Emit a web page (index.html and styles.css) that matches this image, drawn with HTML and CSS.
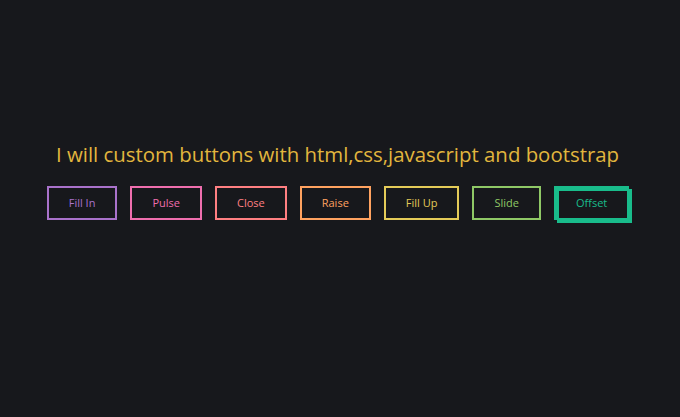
FILE: index.html
```html
<!DOCTYPE html>
<html>
  <head>
    <meta name="viewport" content="width=device-width, initial-scale=1.0">
    <title>Custom Buttons</title>
    <link rel="stylesheet" href="styles.css">
  </head>
  <body>
    <div class="container">
      <h1 class="title">I will custom buttons with html,css,javascript and bootstrap</h1>
      <div class="buttons">
        <button class="fill">Fill In</button>
        <button class="pulse">Pulse</button>
        <button class="close">Close</button>
        <button class="raise">Raise</button>
        <button class="up">Fill Up</button>
        <button class="slide">Slide</button>
        <button class="offset">Offset</button>
      </div>
    </div>
  </body>
</html>
```

FILE: styles.css
```css
body {
  margin: 0;
  height: 100vh;
  background-color: #17181c;
  color: #fff;
  font-family: "Open Sans", "Noto Sans", sans-serif;
}
.container {
  display: flex;
  flex-direction: column;
  align-items: center;
  padding-top: 139px;
}
.title {
  margin: 0 5px 0 0;
  font-size: 20.4px;
  font-weight: 400;
  line-height: 30px;
  color: #e2b63e;
}
.buttons {
  display: flex;
  gap: 13px;
  margin: 17px 4px 0 0;
}
.buttons button {
  background: none;
  border: 2px solid var(--color);
  color: var(--color);
  font-family: "Open Sans", "Noto Sans", sans-serif;
  font-size: 11px;
  font-weight: 500;
  line-height: 10px;
  padding: 10px 20px;
  margin: 0;
  cursor: pointer;
  transition: 0.25s;
}
.buttons button:hover {
  border-color: var(--hover);
  color: #fff;
}
.fill {
  --color: #a972cb;
  --hover: #cb72aa;
}
.pulse {
  --color: #ef6eae;
  --hover: #ef8f6e;
}
.close {
  --color: #ff7f82;
  --hover: #ffdc7f;
}
.raise {
  --color: #ffa260;
  --hover: #e5ff60;
}
.up {
  --color: #e4cb58;
  --hover: #94e458;
}
.slide {
  --color: #8fc866;
  --hover: #66c887;
}
.offset {
  --color: #19bc8b;
  --hover: #1973bc;
  box-shadow: 3px 3px 0 0 var(--color), inset 3px 3px 0 0 var(--color);
}
```
